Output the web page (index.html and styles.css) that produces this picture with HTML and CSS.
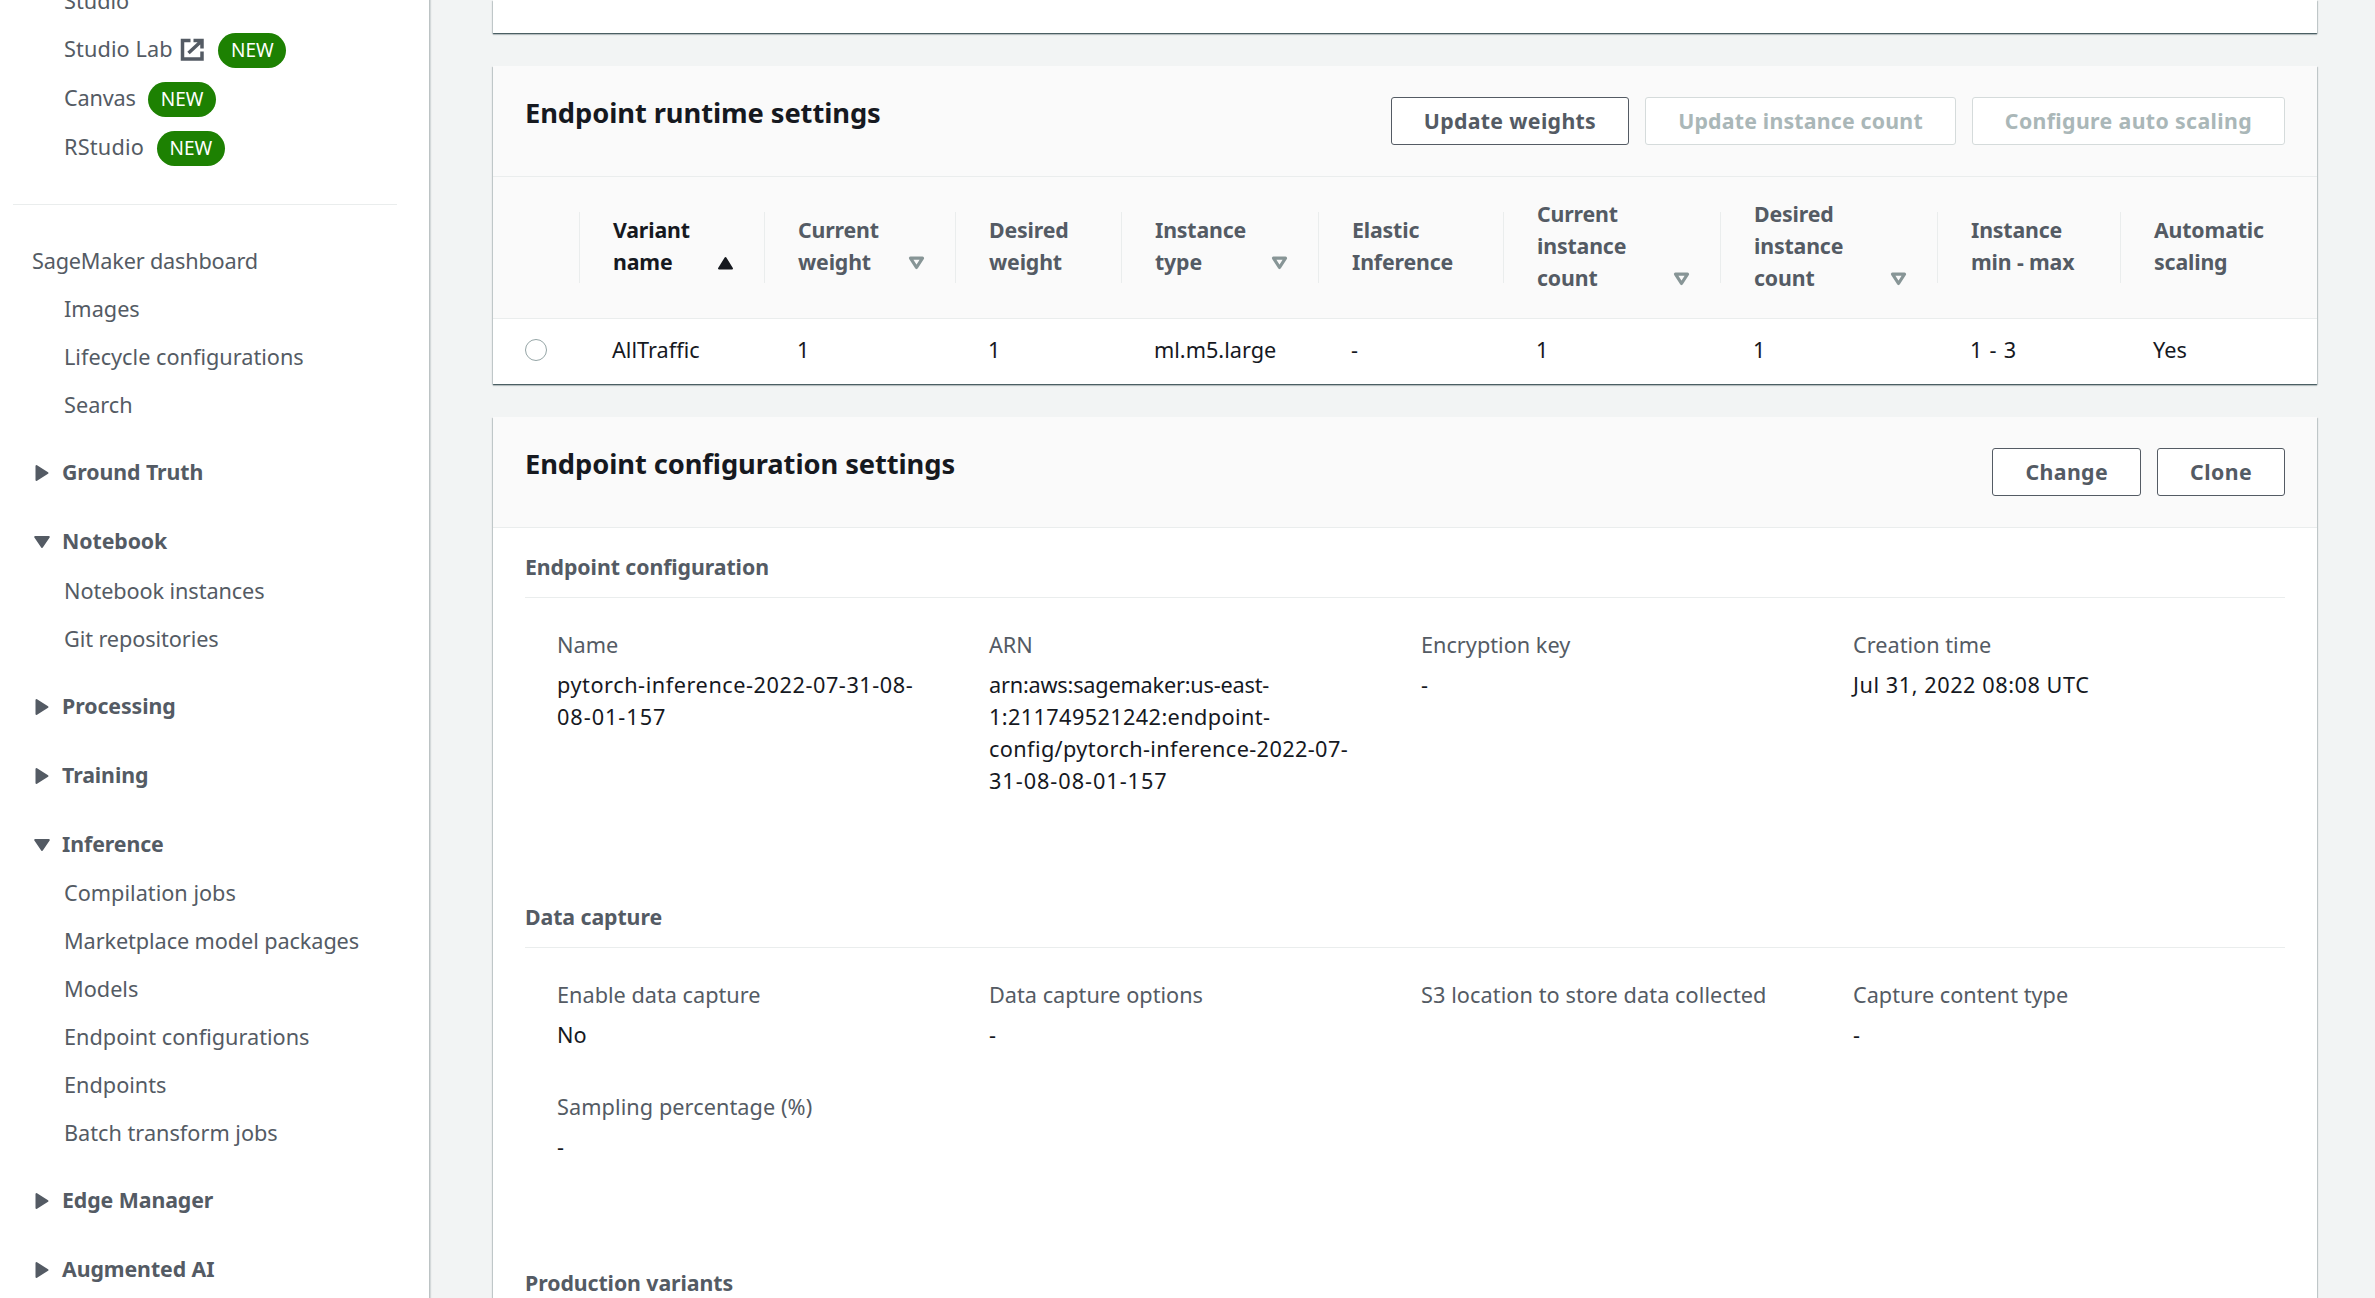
FILE: index.html
```html
<!DOCTYPE html>
<html lang="en">
<head>
<meta charset="utf-8">
<title>Amazon SageMaker</title>
<link rel="stylesheet" href="styles.css">
</head>
<body>
<svg class="symbols" aria-hidden="true">
  <symbol id="closed" viewBox="0 0 16 18"><path d="M2.500 2v14l11-7z" fill="currentColor" stroke="currentColor" stroke-width="2" stroke-linejoin="round"/></symbol>
  <symbol id="open" viewBox="0 0 16 18"><path d="M1.200 4h13.600L8 14z" fill="currentColor" stroke="currentColor" stroke-width="2" stroke-linejoin="round"/></symbol>
  <symbol id="external" viewBox="0 0 24 24"><path d="M10.500 2.500H2.500v18.500h19.500v-7.500M13.500 2.500h8.500v8M21.500 3L8.500 15" fill="none" stroke="currentColor" stroke-width="3.500"/></symbol>
  <symbol id="sort" viewBox="0 0 16 14"><path d="M2 2.200h12L8 11.500z" fill="none" stroke="currentColor" stroke-width="3.200" stroke-linejoin="round"/></symbol>
  <symbol id="sorted" viewBox="0 0 16 14"><path d="M1.500 12.500h13L8 2z" fill="currentColor" stroke="currentColor" stroke-width="2" stroke-linejoin="round"/></symbol>
</svg>
<div class="app">
  <nav class="sidebar">
    <ul class="links links-top">
      <li class="first">Studio</li>
      <li class="studio-lab">Studio Lab <svg class="external"><use href="#external"/></svg><span class="badge">NEW</span></li>
      <li class="canvas">Canvas <span class="badge">NEW</span></li>
      <li class="rstudio">RStudio <span class="badge">NEW</span></li>
    </ul>
    <hr class="divider">
    <div class="dashboard">SageMaker dashboard</div>
    <ul class="links"><li>Images</li><li>Lifecycle configurations</li><li>Search</li></ul>
    <div class="section"><svg><use href="#closed"/></svg>Ground Truth</div>
    <div class="section"><svg><use href="#open"/></svg>Notebook</div>
    <ul class="links nested"><li class="tight">Notebook instances</li><li class="tight">Git repositories</li></ul>
    <div class="section"><svg><use href="#closed"/></svg>Processing</div>
    <div class="section"><svg><use href="#closed"/></svg>Training</div>
    <div class="section"><svg><use href="#open"/></svg>Inference</div>
    <ul class="links nested"><li>Compilation jobs</li><li class="tight">Marketplace model packages</li><li>Models</li><li>Endpoint configurations</li><li>Endpoints</li><li>Batch transform jobs</li></ul>
    <div class="section"><svg><use href="#closed"/></svg>Edge Manager</div>
    <div class="section"><svg><use href="#closed"/></svg>Augmented AI</div>
  </nav>
  <main class="content">
    <section class="card card-previous"></section>
    <section class="card">
      <header class="card-header">
        <h2>Endpoint runtime settings</h2>
        <div class="actions">
          <button class="button button-weights">Update weights</button>
          <button class="button button-count" disabled>Update instance count</button>
          <button class="button button-scaling" disabled>Configure auto scaling</button>
        </div>
      </header>
      <table class="variants">
        <colgroup><col class="c-select"><col class="c-name"><col class="c-weight"><col class="c-desired"><col class="c-type"><col class="c-elastic"><col class="c-count"><col class="c-count"><col class="c-range"><col></colgroup>
        <thead>
          <tr>
            <th></th>
            <th class="active"><div class="head"><span>Variant<br>name</span><svg><use href="#sorted"/></svg></div></th>
            <th><div class="head"><span>Current<br>weight</span><svg><use href="#sort"/></svg></div></th>
            <th><div class="head"><span>Desired<br>weight</span></div></th>
            <th><div class="head"><span>Instance<br>type</span><svg><use href="#sort"/></svg></div></th>
            <th><div class="head"><span>Elastic<br>Inference</span></div></th>
            <th><div class="head head-tall"><span>Current<br>instance<br>count</span><svg><use href="#sort"/></svg></div></th>
            <th><div class="head head-tall"><span>Desired<br>instance<br>count</span><svg><use href="#sort"/></svg></div></th>
            <th><div class="head"><span>Instance<br>min - max</span></div></th>
            <th><div class="head"><span>Automatic<br>scaling</span></div></th>
          </tr>
        </thead>
        <tbody>
          <tr><td class="select"><span class="radio"></span></td><td>AllTraffic</td><td>1</td><td>1</td><td>ml.m5.large</td><td>-</td><td>1</td><td>1</td><td class="range">1 - 3</td><td>Yes</td></tr>
        </tbody>
      </table>
    </section>
    <section class="card card-config">
      <header class="card-header">
        <h2>Endpoint configuration settings</h2>
        <div class="actions">
          <button class="button">Change</button>
          <button class="button">Clone</button>
        </div>
      </header>
      <h3>Endpoint configuration</h3>
      <dl class="fields fields-config">
        <div><dt>Name</dt><dd class="ident">pytorch-inference-2022-07-31-08-<br><span class="digits">08-01-157</span></dd></div>
        <div><dt>ARN</dt><dd class="arn"><span class="service">arn:aws:sagemaker:us-east-</span><br>1:211749521242:endpoint-<br>config/pytorch-inference-2022-07-<br><span class="digits">31-08-08-01-157</span></dd></div>
        <div><dt>Encryption key</dt><dd>-</dd></div>
        <div><dt>Creation time</dt><dd class="ident">Jul 31, 2022 08:08 UTC</dd></div>
      </dl>
      <h3>Data capture</h3>
      <dl class="fields fields-capture">
        <div><dt>Enable data capture</dt><dd>No</dd></div>
        <div><dt>Data capture options</dt><dd>-</dd></div>
        <div><dt class="loose">S3 location to store data collected</dt></div>
        <div><dt>Capture content type</dt><dd>-</dd></div>
        <div><dt class="loose">Sampling percentage (%)</dt><dd>-</dd></div>
      </dl>
      <h3>Production variants</h3>
    </section>
  </main>
</div>
</body>
</html>
```
FILE: styles.css
```css
* { box-sizing: border-box; }

body {
  margin: 0;
  height: 1298px;
  overflow: hidden;
  background: #f2f4f4;
  color: #16191f;
  font: 21.7px/32px "Noto Sans", sans-serif;
}

h2, h3, ul, dl, dd { margin: 0; padding: 0; }
.symbols { display: none; }

.app { display: flex; height: 1298px; overflow: hidden; }

/* Sidebar */
.sidebar {
  flex: none;
  width: 430px;
  height: 1298px;
  overflow: hidden;
  background: #fff;
  color: #545b64;
  border-right: 1px solid #bcc3c4;
  box-shadow: 1px 0 1px rgba(0, 28, 36, .12);
}

.links { list-style: none; padding-left: 64px; }
.links li { display: flex; align-items: center; height: 48px; white-space: pre; }
.links-top li { height: 49px; }
.links-top .first { height: 48px; margin-top: -23px; }
.links-top .studio-lab { margin-top: -1px; letter-spacing: .1px; }
.canvas { letter-spacing: -.2px; }
.rstudio { letter-spacing: .2px; }
.nested { margin-top: 1.5px; }
.links .tight { letter-spacing: -.1px; }

.external { width: 24px; height: 24px; margin: 3px 0 0 2px; }
.badge {
  width: 68px;
  height: 35px;
  margin: 4px 0 0 7px;
  border-radius: 17.5px;
  background: #1d8102;
  color: #fff;
  font-size: 19px;
  line-height: 34px;
  letter-spacing: 0;
  text-align: center;
}
.external + .badge { margin-left: 14px; }

.divider { height: 1px; margin: 33px 32px 32px 13px; border: 0; background: #eaeded; }
.dashboard { padding-left: 32px; line-height: 48px; letter-spacing: -.2px; }

.section {
  display: flex;
  align-items: center;
  gap: 12px;
  height: 48px;
  margin-top: 21px;
  padding-left: 34px;
  font-size: 21.3px;
  font-weight: 700;
  letter-spacing: -.08px;
}
.links + .section { margin-top: 19px; }
.section svg { width: 16px; height: 18px; margin-top: 2px; }

/* Cards */
.content {
  flex: none;
  display: flex;
  flex-direction: column;
  gap: 33px;
  width: 1824px;
  margin-left: 63px;
}
.card {
  flex: none;
  background: #fff;
  box-shadow: 0 1px 0 rgba(0, 28, 36, .42), 0 2px 1px rgba(0, 28, 36, .2), 1px 1px 1px rgba(0, 28, 36, .18), -1px 1px 1px rgba(0, 28, 36, .18);
}
.card-previous { height: 33px; }
.card-header {
  display: flex;
  justify-content: space-between;
  align-items: flex-start;
  height: 111px;
  padding: 31px 32px 0;
  background: #fafafa;
  border-bottom: 1px solid #eaeded;
}
h2 { font-size: 27.3px; line-height: 32px; letter-spacing: -.08px; }

.actions { display: flex; gap: 16px; }
.button {
  height: 48px;
  padding: 0 32px;
  border: 1.5px solid #545b64;
  border-radius: 3px;
  background: #fff;
  color: #545b64;
  font: 700 21.3px/44px "Noto Sans", sans-serif;
  letter-spacing: .4px;
}
.button:disabled { border-color: #d5dbdb; color: #aab7b8; }
.button-weights { letter-spacing: .33px; }
.button-count { letter-spacing: .2px; }
.button-scaling { letter-spacing: .36px; }

/* Variants table */
.variants { width: 1824px; table-layout: fixed; border-collapse: collapse; }
.c-select { width: 86px; }
.c-name { width: 185px; }
.c-weight { width: 191px; }
.c-desired { width: 166px; }
.c-type { width: 197px; }
.c-elastic { width: 185px; }
.c-count { width: 217px; }
.c-range { width: 183px; }

.variants th {
  height: 141px;
  padding: 0;
  background: #fafafa;
  border-bottom: 1px solid #eaeded;
  color: #545b64;
  font-size: 21.3px;
  letter-spacing: -.15px;
  text-align: left;
}
.variants .active { color: #16191f; }
.head {
  display: flex;
  align-items: center;
  justify-content: space-between;
  height: 71px;
  padding: 0 30px 2px 33px;
  border-left: 1px solid #eaeded;
  white-space: nowrap;
}
.head svg {
  align-self: flex-end;
  width: 17px;
  height: 14px;
  margin-bottom: 11px;
  color: #879596;
}
.active svg { color: #16191f; }
.head-tall { line-height: 32px; }
.head-tall span { margin: -14px 0; }
.head-tall svg { margin-bottom: -5px; }
.variants td { height: 66px; padding: 0 0 2px 33px; }
.variants .select { padding-left: 32px; }
.range { word-spacing: 1.5px; }
.radio {
  display: block;
  width: 22px;
  height: 22px;
  border: 1.5px solid #95a5a6;
  border-radius: 50%;
  background: #fff;
}

/* Configuration details */
.card-config { height: 1100px; }
h3 {
  height: 70px;
  margin: 0 32px;
  padding-top: 23px;
  border-bottom: 1px solid #eaeded;
  color: #545b64;
  font-size: 21.3px;
  line-height: 32px;
  letter-spacing: -.08px;
}
.fields {
  display: grid;
  grid-template-columns: repeat(4, 432px);
  padding: 31px 0 0 64px;
}
.fields-config { height: 280px; }
.fields-capture { height: 296px; grid-auto-rows: 112px; }
.fields dt { margin-bottom: 8px; color: #545b64; }
.loose { letter-spacing: .07px; }
.ident { letter-spacing: .55px; }
.arn { letter-spacing: .38px; }
.service { letter-spacing: -.2px; }
.digits { letter-spacing: .95px; }
```
